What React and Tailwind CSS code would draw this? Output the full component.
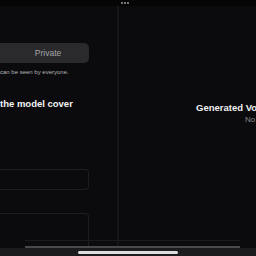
export default function App() {
  return (
    <div className="w-[256px] h-[256px] bg-[#0b0b0d] overflow-hidden flex flex-col relative font-['Liberation_Sans',Arial,sans-serif]">
      <div className="h-[6px] shrink-0 bg-[#050506] flex items-center">
        <div className="ml-[121px] flex gap-[1px]">
          <span className="w-[2px] h-[2px] rounded-full bg-[#9a9a9a]" />
          <span className="w-[2px] h-[2px] rounded-full bg-[#9a9a9a]" />
          <span className="w-[2px] h-[2px] rounded-full bg-[#9a9a9a]" />
        </div>
      </div>
      <div className="flex flex-1 min-h-0">
        <div className="w-[117px] shrink-0 flex flex-col overflow-hidden">
          <div className="mt-[37px] shrink-0 w-[89px] h-[20px] bg-[#2a2a2c] rounded-r-[5px] pl-[7px] flex items-center justify-center text-[8.5px] text-[#a4a4a6]">
            Private
          </div>
          <div className="mt-[5px] shrink-0 text-[6px] leading-[8px] text-[#b4b4b6] whitespace-nowrap">can be seen by everyone.</div>
          <div className="mt-[22px] shrink-0 text-[9.5px] leading-[12px] font-bold text-[#f4f4f4] whitespace-nowrap">the model cover</div>
          <div className="mt-[59px] w-[89px] h-[21px] shrink-0 border border-[#1e1e21] rounded-r-[4px] border-l-0" />
          <div className="mt-[23px] w-[89px] h-[60px] shrink-0 border border-[#1e1e21] rounded-r-[4px] border-l-0" />
        </div>
        <div className="w-[2px] shrink-0 bg-[#161619]" />
        <div className="flex-1 min-w-0 overflow-hidden flex flex-col pt-[96px] pl-[77px]">
          <div className="shrink-0 text-[9.5px] leading-[12px] font-bold text-[#f0f0f0] whitespace-nowrap">Generated Voices</div>
          <div className="shrink-0 ml-[49px] mt-[1px] text-[8px] leading-[10px] text-[#8a8a8c] whitespace-nowrap">No voices yet</div>
        </div>
      </div>
      <div className="h-[8px] shrink-0 bg-[#1b1b1d] flex items-start">
        <div className="ml-[78px] mt-[3px] w-[100px] h-[3px] rounded-full bg-[#dcdcdc]" />
      </div>
      <div className="absolute left-[25px] top-[240px] w-[215px] h-[8px] border-t border-[#1c1c1e] border-b-2 border-b-[#4a4a4c]" />
    </div>
  );
}
